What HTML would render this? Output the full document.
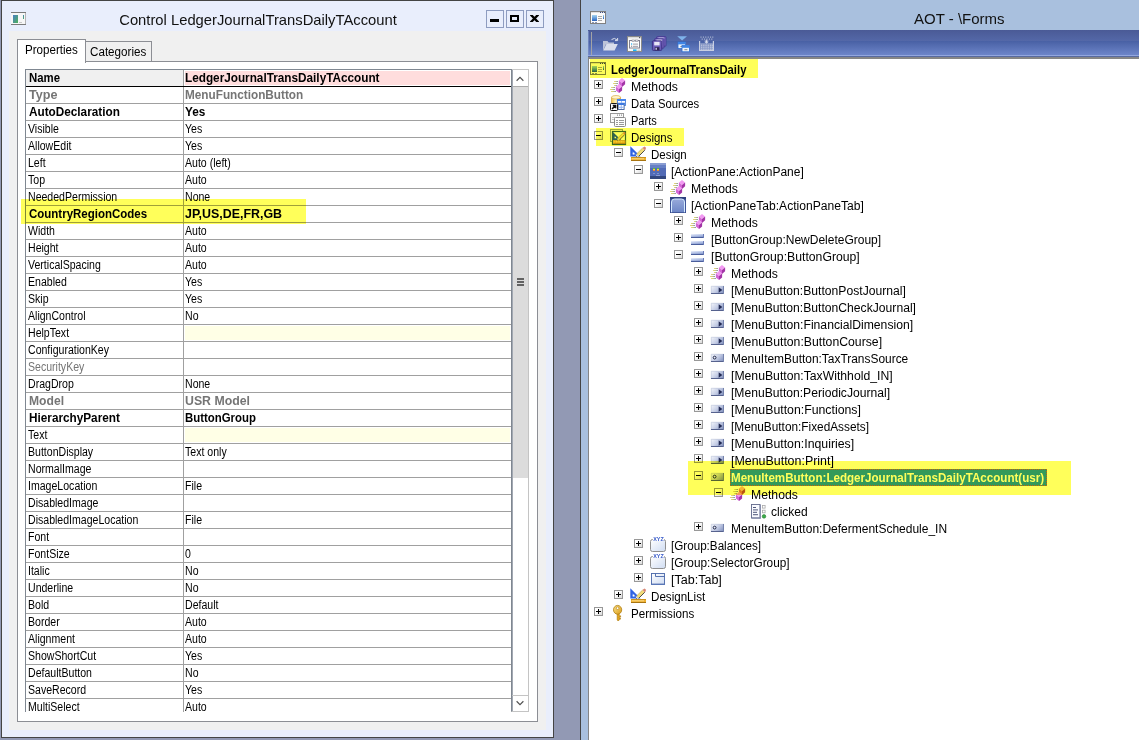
<!DOCTYPE html>
<html lang="en"><head><meta charset="utf-8"><title>Control LedgerJournalTransDailyTAccount</title>
<style>
html,body{margin:0;padding:0}
body{width:1139px;height:740px;overflow:hidden;background:#9299b4;position:relative;font-family:"Liberation Sans",sans-serif;color:#000}
div,span{position:absolute;box-sizing:border-box;white-space:pre}
svg{position:absolute;overflow:visible}
#lw{left:1px;top:0;width:553px;height:738px;background:#e9eefc;border:1px solid #444}
#lt{left:29px;top:10px;width:454px;transform:scaleX(.985);text-align:center;font-size:15px;line-height:18px;color:#111}
.cb{top:9px;width:18px;height:18px;border:1px solid #8e9cc0;background:#e9eefc}
#lc{left:7px;top:30px;width:537px;height:699px;background:#f0f0f0}
#panel{left:8px;top:30px;width:521px;height:661px;background:#fff;border:1px solid #8c8e94}
.tab{font-size:12px;line-height:14px;color:#000}
#tab1{left:8px;top:8px;width:69px;height:24px;background:#fff;border:1px solid #8c8e94;border-bottom:none}
#tab2{left:76px;top:10px;width:67px;height:20px;background:#f0f0f0;border:1px solid #8c8e94;border-bottom:none}
#grid{left:7px;top:7px;width:504px;height:643px;background:#fff;overflow:hidden;border-left:1px solid #7f8791;border-top:1px solid #7f8791}
.r{left:0;width:485px;height:17px;border-bottom:1px solid #a0a0a0}
.r .k,.r .v{top:0;height:16px;font-size:12px;line-height:16px;transform-origin:0 50%}
.r .k{left:2px}
.r .v{left:159px}
.r .s{left:157px;top:0;width:1px;height:16px;background:#a0a0a0}
.n .k,.n .v{transform:scaleX(.88)}
.b .k,.b .v{font-weight:bold;transform:scaleX(.98)}
.b .k{left:3px}
.g{color:#757575}
.vb{left:159px;top:1px;width:325px;height:14px}
#sb{left:485px;top:-1px;width:18px;height:643px;background:#fff;border-left:1px solid #7f8791;border-right:1px solid #c4c4c4;border-top:1px solid #c8c8c8;border-bottom:1px solid #c4c4c4}
#rw{left:580px;top:0;width:559px;height:740px;background:#a9c0de;border-left:1px solid #444}
#rt{left:333px;top:10px;font-size:15px;line-height:18px;color:#111}
#tb{left:7px;top:30px;width:552px;height:27px;background:linear-gradient(#4a5a96 0,#5468a8 11px,#4860a4 11px,#6d85c9 25px,#93a7df 25px,#93a7df 26px,#586aa0 26px,#586aa0 27px)}
#tree{left:7px;top:57px;width:552px;height:683px;background:#fff;border-left:1px solid #868686;border-top:2px solid #868686}
.t{font-size:12px;line-height:17px;height:17px;transform-origin:0 50%}
.tbld{font-weight:bold;transform:scaleX(.93)}
.x{width:9px;height:9px;border:1px solid #989898;background:linear-gradient(135deg,#fff 35%,#d8d8d8)}
.x i{position:absolute;left:1px;top:3px;width:5px;height:1px;background:#000}
.x b{position:absolute;left:3px;top:1px;width:1px;height:5px;background:#000}
.hl{background:#ffff5a;mix-blend-mode:multiply}
</style></head>
<body>
<svg width="0" height="0" style="left:0;top:0"><defs><linearGradient id="gb" x1="0" y1="0" x2=".35" y2="1"><stop offset="0" stop-color="#eef2fb"/><stop offset=".5" stop-color="#b4c2e6"/><stop offset="1" stop-color="#7a90c8"/></linearGradient><linearGradient id="gw" x1="0" y1="0" x2="0" y2="1"><stop offset="0" stop-color="#a4d4f2"/><stop offset=".8" stop-color="#3f7ccc"/><stop offset="1" stop-color="#2a5cb4"/></linearGradient><linearGradient id="gg" x1="0" y1="0" x2="1" y2="1"><stop offset="0" stop-color="#ffffff"/><stop offset="1" stop-color="#cfdcf2"/></linearGradient><linearGradient id="gy" x1="0" y1="0" x2="1" y2="0"><stop offset="0" stop-color="#f3c64a"/><stop offset=".45" stop-color="#fdf0b8"/><stop offset="1" stop-color="#e0a830"/></linearGradient><linearGradient id="gk" x1="0" y1="0" x2="1" y2="1"><stop offset="0" stop-color="#fde48a"/><stop offset="1" stop-color="#d89a18"/></linearGradient><linearGradient id="gx" x1="0" y1="0" x2="1" y2="1"><stop offset="0" stop-color="#ffffff"/><stop offset="1" stop-color="#d4d4d4"/></linearGradient><linearGradient id="gm" x1="0" y1="0" x2="1" y2="0"><stop offset="0" stop-color="#f0e070"/><stop offset=".5" stop-color="#c8c488"/><stop offset="1" stop-color="#8494b0"/></linearGradient><linearGradient id="gt" x1="0" y1="0" x2="0" y2="1"><stop offset="0" stop-color="#98aadb"/><stop offset="1" stop-color="#6b85c6"/></linearGradient><linearGradient id="gn" x1="0" y1="0" x2="1" y2=".6"><stop offset="0" stop-color="#f6f8fc"/><stop offset=".55" stop-color="#c6cee6"/><stop offset="1" stop-color="#8c9ac4"/></linearGradient></defs></svg>
<div id="lw">
<div id="lt">Control LedgerJournalTransDailyTAccount</div>
<svg style="left:9px;top:11px" width="15" height="13" viewBox="0 0 15 13"><rect x="0" y="0" width="15" height="13" fill="#f7f7f7"/><rect x="0" y="0" width="15" height="1" fill="#7a7a7a"/><rect x="0" y="12" width="15" height="1" fill="#7a7a7a"/><rect x="14" y="1" width="1" height="11" fill="#b4b4b4"/><defs><linearGradient id="ga" x1="0" y1="0" x2="1" y2="1"><stop offset="0" stop-color="#4b7fc4"/><stop offset="1" stop-color="#4fb15a"/></linearGradient></defs><rect x="2" y="3" width="5" height="8" fill="url(#ga)"/><rect x="8" y="10" width="3" height="1" fill="#c8c8c8"/><rect x="12" y="3" width="1" height="4" fill="url(#ga)"/></svg>
<div class="cb" style="left:484px"><div style="left:3px;top:8px;width:9px;height:3px;background:#000"></div></div>
<div class="cb" style="left:504px"><div style="left:3px;top:4px;width:9px;height:7px;border:2px solid #000"></div></div>
<div class="cb" style="left:524px"><svg style="left:3px;top:4px;overflow:hidden" width="9" height="7" viewBox="0 0 9 7"><path d="M0.6 -0.6 L8.4 7.6 M8.4 -0.6 L0.6 7.6" stroke="#000" stroke-width="2.3"/></svg></div>
<div id="lc">
<div id="panel">
<div id="grid">
<div class="r b" style="top:0px;border-bottom-color:#000"><div style="left:0;top:0;width:157px;height:16px;background:#f0f0f0"></div><div class="vb" style="background:#ffdddd"></div><span class="k" style="transform:scaleX(0.95)">Name</span><div class="s"></div><span class="v">LedgerJournalTransDailyTAccount</span></div>
<div class="r b" style="top:17px"><span class="k g" style="transform:scaleX(1.05)">Type</span><div class="s"></div><span class="v g">MenuFunctionButton</span></div>
<div class="r b" style="top:34px"><span class="k">AutoDeclaration</span><div class="s"></div><span class="v">Yes</span></div>
<div class="r n" style="top:51px"><span class="k">Visible</span><div class="s"></div><span class="v">Yes</span></div>
<div class="r n" style="top:68px"><span class="k">AllowEdit</span><div class="s"></div><span class="v">Yes</span></div>
<div class="r n" style="top:85px"><span class="k">Left</span><div class="s"></div><span class="v">Auto (left)</span></div>
<div class="r n" style="top:102px"><span class="k">Top</span><div class="s"></div><span class="v">Auto</span></div>
<div class="r n" style="top:119px"><span class="k">NeededPermission</span><div class="s"></div><span class="v">None</span></div>
<div class="r b" style="top:136px"><span class="k" style="transform:scaleX(0.958)">CountryRegionCodes</span><div class="s"></div><span class="v" style="transform:scaleX(1.035)">JP,US,DE,FR,GB</span></div>
<div class="r n" style="top:153px"><span class="k">Width</span><div class="s"></div><span class="v">Auto</span></div>
<div class="r n" style="top:170px"><span class="k">Height</span><div class="s"></div><span class="v">Auto</span></div>
<div class="r n" style="top:187px"><span class="k">VerticalSpacing</span><div class="s"></div><span class="v">Auto</span></div>
<div class="r n" style="top:204px"><span class="k">Enabled</span><div class="s"></div><span class="v">Yes</span></div>
<div class="r n" style="top:221px"><span class="k">Skip</span><div class="s"></div><span class="v">Yes</span></div>
<div class="r n" style="top:238px"><span class="k">AlignControl</span><div class="s"></div><span class="v">No</span></div>
<div class="r n" style="top:255px"><div class="vb" style="background:#ffffe6"></div><span class="k">HelpText</span><div class="s"></div><span class="v"></span></div>
<div class="r n" style="top:272px"><span class="k">ConfigurationKey</span><div class="s"></div><span class="v"></span></div>
<div class="r n" style="top:289px"><span class="k g">SecurityKey</span><div class="s"></div><span class="v g"></span></div>
<div class="r n" style="top:306px"><span class="k">DragDrop</span><div class="s"></div><span class="v">None</span></div>
<div class="r b" style="top:323px"><span class="k g" style="transform:scaleX(1.01)">Model</span><div class="s"></div><span class="v g" style="transform:scaleX(1.025)">USR Model</span></div>
<div class="r b" style="top:340px"><span class="k">HierarchyParent</span><div class="s"></div><span class="v" style="transform:scaleX(0.95)">ButtonGroup</span></div>
<div class="r n" style="top:357px"><div class="vb" style="background:#ffffe6"></div><span class="k">Text</span><div class="s"></div><span class="v"></span></div>
<div class="r n" style="top:374px"><span class="k">ButtonDisplay</span><div class="s"></div><span class="v">Text only</span></div>
<div class="r n" style="top:391px"><span class="k">NormalImage</span><div class="s"></div><span class="v"></span></div>
<div class="r n" style="top:408px"><span class="k">ImageLocation</span><div class="s"></div><span class="v">File</span></div>
<div class="r n" style="top:425px"><span class="k">DisabledImage</span><div class="s"></div><span class="v"></span></div>
<div class="r n" style="top:442px"><span class="k">DisabledImageLocation</span><div class="s"></div><span class="v">File</span></div>
<div class="r n" style="top:459px"><span class="k">Font</span><div class="s"></div><span class="v"></span></div>
<div class="r n" style="top:476px"><span class="k">FontSize</span><div class="s"></div><span class="v">0</span></div>
<div class="r n" style="top:493px"><span class="k">Italic</span><div class="s"></div><span class="v">No</span></div>
<div class="r n" style="top:510px"><span class="k">Underline</span><div class="s"></div><span class="v">No</span></div>
<div class="r n" style="top:527px"><span class="k">Bold</span><div class="s"></div><span class="v">Default</span></div>
<div class="r n" style="top:544px"><span class="k">Border</span><div class="s"></div><span class="v">Auto</span></div>
<div class="r n" style="top:561px"><span class="k">Alignment</span><div class="s"></div><span class="v">Auto</span></div>
<div class="r n" style="top:578px"><span class="k">ShowShortCut</span><div class="s"></div><span class="v">Yes</span></div>
<div class="r n" style="top:595px"><span class="k">DefaultButton</span><div class="s"></div><span class="v">No</span></div>
<div class="r n" style="top:612px"><span class="k">SaveRecord</span><div class="s"></div><span class="v">Yes</span></div>
<div class="r n" style="top:629px"><span class="k">MultiSelect</span><div class="s"></div><span class="v">Auto</span></div>
<div id="sb"><svg style="left:4px;top:6px" width="8" height="6" viewBox="0 0 9 6"><path d="M0.7 5 L4.5 1.2 L8.3 5" fill="none" stroke="#505050" stroke-width="1.3"/></svg><div style="left:0;top:16px;width:16px;height:392px;background:#dcdcdc;border-top:1px solid #acacac"></div><div style="left:5px;top:208px;width:7px;height:2px;background:#636363"></div><div style="left:5px;top:211px;width:7px;height:2px;background:#636363"></div><div style="left:5px;top:214px;width:7px;height:2px;background:#636363"></div><div style="left:0;top:0;width:1px;height:641px;background:#a2a8b2"></div><svg style="left:4px;top:630px" width="8" height="6" viewBox="0 0 9 6"><path d="M0.7 1 L4.5 4.8 L8.3 1" fill="none" stroke="#505050" stroke-width="1.3"/></svg><div style="left:0;top:625px;width:16px;height:1px;background:#c4c4c4"></div></div>
</div>
<div style="left:494px;top:7px;width:17px;height:1px;background:#c8c8c8"></div>
</div>
<div id="tab1" class="tab"><span style="left:7px;top:3px;transform:scaleX(.965);transform-origin:0 50%">Properties</span></div>
<div id="tab2" class="tab"><span style="left:4px;top:3px;transform:scaleX(.97);transform-origin:0 50%">Categories</span></div>
<div style="left:12px;top:168px;width:285px;height:25px;background:#ffff5a;mix-blend-mode:multiply"></div>
</div>
</div>
<div id="rw">
<div id="rt">AOT - \Forms</div>
<svg style="left:9px;top:11px" width="16" height="13" viewBox="0 0 16 13"><rect x="0.5" y="0.5" width="15" height="12" fill="#fbfbfb" stroke="#808080"/><rect x="1" y="1" width="14" height="1" fill="#e2e2e2"/><rect x="10" y="1" width="1" height="1" fill="#3c4c84"/><rect x="12" y="1" width="1" height="1" fill="#3c4c84"/><rect x="14" y="1" width="1" height="1" fill="#3c4c84"/><rect x="2" y="4" width="5" height="6" fill="url(#gw)"/><rect x="8" y="5" width="4" height="1" fill="#a8a8a8"/><rect x="8" y="7" width="4" height="1" fill="#a8a8a8"/><rect x="8" y="9" width="4" height="1" fill="#a8a8a8"/><rect x="13" y="4" width="1" height="4" fill="url(#gw)"/><rect x="2" y="11" width="2" height="1" fill="#8894b4"/><rect x="5" y="11" width="2" height="1" fill="#8894b4"/></svg>
<div id="tb"><div style="left:0;top:1px;width:1px;height:24px;background:#7d91c8;opacity:.7"></div><div style="left:3px;top:2px;width:1px;height:23px;background:#a3a3a6"></div><svg style="left:14px;top:6px" width="16" height="16" viewBox="0 0 16 16"><path d="M1 5 h4.5 l1.2 1.4 h5.3 v1.6 h-8 l-3 6.5 z" fill="#bcc3d8"/><path d="M4.4 8 h11.4 l-3.2 6.6 h-11.4 z" fill="#d9deec"/><path d="M9.5 3.6 q3 -2.6 5.6 0.4" fill="none" stroke="#d9deec" stroke-width="1"/><path d="M15.6 2 v2.6 h-2.6" fill="none" stroke="#d9deec" stroke-width="1"/></svg>
<svg style="left:39px;top:6px" width="16" height="16" viewBox="0 0 16 16"><rect x="0.5" y="0.5" width="14" height="15" fill="#f8f8f8" stroke="#8a8a8a"/><rect x="1" y="1" width="13" height="1.4" fill="#dcdcdc"/><rect x="12" y="1" width="1.2" height="1.2" fill="#556"/><rect x="2.5" y="4.5" width="10" height="7.5" fill="#fff" stroke="#80808e"/><rect x="5" y="4" width="2.6" height="1.6" fill="#fff" stroke="#80808e" stroke-width=".6"/><rect x="8.4" y="4" width="2.6" height="1.6" fill="#fff" stroke="#80808e" stroke-width=".6"/><rect x="4" y="7.4" width="1.2" height="1.2" fill="#18a8f0"/><rect x="6" y="7.6" width="5" height="1" fill="#9a9aa4"/><rect x="4" y="9.6" width="1.2" height="1.2" fill="#8a8a94"/><rect x="6" y="9.8" width="5" height="1" fill="#9a9aa4"/><rect x="6" y="13.4" width="3.6" height="1.6" fill="#18b4f4"/><rect x="10.4" y="13.6" width="3" height="1.2" fill="#c8c8c8"/></svg>
<svg style="left:64px;top:6px" width="16" height="16" viewBox="0 0 16 16"><g transform="translate(4.6,0.6)"><rect x="0" y="0" width="9.4" height="9.6" rx=".8" fill="#7868c0" stroke="#40348c" stroke-width=".8"/><rect x="1.8" y="1" width="5.4" height="3.6" fill="#e8e6f6"/><rect x="2.4" y="6.4" width="4.6" height="3.2" fill="#2c2450"/><rect x="3" y="7" width="1.6" height="2" fill="#b8b4d8"/></g><g transform="translate(2.6,2.6)"><rect x="0" y="0" width="9.4" height="9.6" rx=".8" fill="#7464bc" stroke="#40348c" stroke-width=".8"/><rect x="1.8" y="1" width="5.4" height="3.6" fill="#e8e6f6"/><rect x="2.4" y="6.4" width="4.6" height="3.2" fill="#2c2450"/><rect x="3" y="7" width="1.6" height="2" fill="#b8b4d8"/></g><g transform="translate(0.4,4.8)"><rect x="0" y="0" width="9.4" height="9.6" rx=".8" fill="#6c5cb8" stroke="#34287c" stroke-width=".8"/><rect x="1.8" y="1" width="5.4" height="3.6" fill="#e8e6f6"/><rect x="2.4" y="6.4" width="4.6" height="3.2" fill="#2c2450"/><rect x="3" y="7" width="1.6" height="2" fill="#b8b4d8"/></g></svg>
<svg style="left:89px;top:6px" width="16" height="16" viewBox="0 0 16 16"><polygon points="0.2,0.2 10,0.2 5.1,4.6" fill="#7fb2ea"/><rect x="1" y="6" width="7.4" height="6.6" fill="#eef4fc" stroke="#2f6fd0" stroke-width=".8"/><rect x="1" y="6" width="7.4" height="2.4" fill="#3f84e4"/><rect x="3.4" y="10" width="3" height="1" fill="#8a8a8a"/><rect x="5" y="9.4" width="7.4" height="6.4" fill="#eef4fc" stroke="#2f6fd0" stroke-width=".8"/><rect x="5" y="9.4" width="7.4" height="2.4" fill="#3f84e4"/><rect x="7.4" y="13.2" width="3" height="1" fill="#8a8a8a"/></svg>
<svg style="left:111px;top:6px" width="16" height="16" viewBox="0 0 16 16"><path d="M0.6 5 V14.4 H14.4 V5" fill="none" stroke="#c9cfe2" stroke-width="1.2"/><rect x="1.5" y="0.6" width="1" height="1" fill="#c9cfe2"/><rect x="3.9" y="0.6" width="1" height="1" fill="#c9cfe2"/><rect x="6.3" y="0.6" width="1" height="1" fill="#c9cfe2"/><rect x="8.7" y="0.6" width="1" height="1" fill="#c9cfe2"/><rect x="11.1" y="0.6" width="1" height="1" fill="#c9cfe2"/><rect x="13.3" y="0.6" width="1" height="1" fill="#c9cfe2"/><rect x="2.7" y="2.6" width="1" height="1" fill="#c9cfe2"/><rect x="5.1" y="2.6" width="1" height="1" fill="#c9cfe2"/><rect x="7.5" y="2.6" width="1" height="1" fill="#c9cfe2"/><rect x="9.9" y="2.6" width="1" height="1" fill="#c9cfe2"/><rect x="12.3" y="2.6" width="1" height="1" fill="#c9cfe2"/><rect x="2" y="8.6" width="1.3" height="1.2" fill="#dfe3f0"/><rect x="4.2" y="8.6" width="1.3" height="1.2" fill="#dfe3f0"/><rect x="6.4" y="8.6" width="1.3" height="1.2" fill="#dfe3f0"/><rect x="8.6" y="8.6" width="1.3" height="1.2" fill="#dfe3f0"/><rect x="10.8" y="8.6" width="1.3" height="1.2" fill="#dfe3f0"/><rect x="12.6" y="8.6" width="1.3" height="1.2" fill="#dfe3f0"/><rect x="2" y="10.6" width="1.3" height="1.2" fill="#dfe3f0"/><rect x="4.2" y="10.6" width="1.3" height="1.2" fill="#dfe3f0"/><rect x="6.4" y="10.6" width="1.3" height="1.2" fill="#dfe3f0"/><rect x="8.6" y="10.6" width="1.3" height="1.2" fill="#dfe3f0"/><rect x="10.8" y="10.6" width="1.3" height="1.2" fill="#dfe3f0"/><rect x="12.6" y="10.6" width="1.3" height="1.2" fill="#dfe3f0"/><rect x="2" y="12.6" width="1.3" height="1.2" fill="#dfe3f0"/><rect x="4.2" y="12.6" width="1.3" height="1.2" fill="#dfe3f0"/><rect x="6.4" y="12.6" width="1.3" height="1.2" fill="#dfe3f0"/><rect x="8.6" y="12.6" width="1.3" height="1.2" fill="#dfe3f0"/><rect x="10.8" y="12.6" width="1.3" height="1.2" fill="#dfe3f0"/><rect x="12.6" y="12.6" width="1.3" height="1.2" fill="#dfe3f0"/><rect x="1.2" y="7" width="12.6" height="7" fill="#aab4d4" opacity=".55"/><path d="M7.5 3.6 v4 M5.6 5.8 h3.8 M6.2 4.4 l2.6 2.6 M8.8 4.4 l-2.6 2.6" stroke="#dfe3f0" stroke-width=".8"/></svg>
</div>
<div id="tree">
<svg style="left:1px;top:2px" width="16" height="16" viewBox="0 0 16 16"><g transform="translate(0,1)"><rect x="0.5" y="0.5" width="15" height="12" fill="#fbfbfb" stroke="#808080"/><rect x="1" y="1" width="14" height="1" fill="#e2e2e2"/><rect x="10" y="1" width="1" height="1" fill="#3c4c84"/><rect x="12" y="1" width="1" height="1" fill="#3c4c84"/><rect x="14" y="1" width="1" height="1" fill="#3c4c84"/><rect x="2" y="4" width="5" height="6" fill="url(#gw)"/><rect x="8" y="5" width="4" height="1" fill="#a8a8a8"/><rect x="8" y="7" width="4" height="1" fill="#a8a8a8"/><rect x="8" y="9" width="4" height="1" fill="#a8a8a8"/><rect x="13" y="4" width="1" height="4" fill="url(#gw)"/><rect x="2" y="11" width="2" height="1" fill="#8894b4"/><rect x="5" y="11" width="2" height="1" fill="#8894b4"/></g></svg>
<span class="t tbld" style="left:22px;top:3px;transform:scaleX(0.94)">LedgerJournalTransDaily</span>
<div class="x" style="left:5px;top:21px"><i></i><b></b></div><svg style="left:21px;top:19px" width="16" height="16" viewBox="0 0 16 16"><rect x="4" y="3" width="4" height="1" fill="url(#gm)"/><rect x="3" y="5" width="5" height="1" fill="url(#gm)"/><rect x="4" y="7" width="3" height="1" fill="url(#gm)"/><rect x="1" y="9" width="4" height="1" fill="url(#gm)"/><rect x="0" y="11" width="5" height="1" fill="url(#gm)"/><rect x="1" y="13" width="5" height="1" fill="url(#gm)"/><polygon points="12.0,0.0 15.1,2.5 12.0,5.0 8.9,2.5" fill="#f29af2"/><polygon points="8.9,2.5 12.0,5.0 12.0,8.9 8.9,6.3" fill="#d465d6"/><polygon points="15.1,2.5 12.0,5.0 12.0,8.9 15.1,6.3" fill="#a234a6"/><polygon points="9.0,6.1 12.1,8.6 9.0,11.1 5.9,8.6" fill="#f29af2"/><polygon points="5.9,8.6 9.0,11.1 9.0,15.0 5.9,12.4" fill="#d465d6"/><polygon points="12.1,8.6 9.0,11.1 9.0,15.0 12.1,12.4" fill="#a234a6"/></svg>
<span class="t" style="left:42px;top:20px;transform:scaleX(1.017)">Methods</span>
<div class="x" style="left:5px;top:38px"><i></i><b></b></div><svg style="left:21px;top:36px" width="16" height="16" viewBox="0 0 16 16"><path d="M1.5 2.3 v6.4 a4.5 1.8 0 0 0 9 0 v-6.4 z" fill="url(#gy)" stroke="#d0a238" stroke-width=".7"/><ellipse cx="6" cy="2.3" rx="4.5" ry="1.8" fill="#fef4cc" stroke="#d8ac44" stroke-width=".7"/><rect x="7.5" y="4.5" width="8" height="6" fill="#fff" stroke="#4a80dc" stroke-width=".9"/><rect x="7" y="4" width="9" height="2" fill="#4684ea"/><rect x="8" y="7.6" width="7" height=".9" fill="#86acf0"/><rect x="11.2" y="6" width=".8" height="4" fill="#86acf0"/><rect x="8.1" y="8.5" width="6" height="6" fill="#fff" stroke="#3a5c9c" stroke-width=".9"/><rect x="7.6" y="8" width="7" height="2" fill="#3c78e0"/><rect x="8.6" y="11.8" width="5" height=".9" fill="#86acf0"/><rect x="10.8" y="10" width=".8" height="4" fill="#86acf0"/><rect x="0.5" y="8.5" width="7" height="7" rx=".8" fill="#fff" stroke="#181818"/><path d="M2 14 L5.4 10.6 M2.8 10.4 H5.6 V13.2" stroke="#101010" stroke-width="1.5" fill="none"/></svg>
<span class="t" style="left:42px;top:37px;transform:scaleX(0.938)">Data Sources</span>
<div class="x" style="left:5px;top:55px"><i></i><b></b></div><svg style="left:21px;top:53px" width="16" height="16" viewBox="0 0 16 16"><rect x="0.5" y="1.5" width="13" height="9" fill="#fbfbfb" stroke="#9a9a9a"/><rect x="7" y="2.6" width="1" height="1" fill="#777"/><rect x="9" y="2.6" width="1" height="1" fill="#777"/><rect x="11" y="2.6" width="1" height="1" fill="#777"/><rect x="2" y="5" width="3" height="1" fill="#c4c4c4"/><rect x="2" y="7" width="2" height="1" fill="#c4c4c4"/><rect x="4.5" y="5.5" width="11" height="9" rx="1" fill="#fdfdfd" stroke="#8a8a8a"/><rect x="6" y="8" width="2" height="1" fill="#999"/><rect x="9" y="8" width="5" height="1" fill="#999"/><rect x="6" y="10" width="2" height="1" fill="#999"/><rect x="9" y="10" width="5" height="1" fill="#999"/><rect x="6" y="12" width="2" height="1" fill="#999"/><rect x="9" y="12" width="5" height="1" fill="#999"/></svg>
<span class="t" style="left:42px;top:54px;transform:scaleX(0.92)">Parts</span>
<div class="x" style="left:5px;top:72px"><i></i></div><svg style="left:21px;top:70px" width="16" height="16" viewBox="0 0 16 16"><rect x="0.5" y="0.5" width="12" height="12" fill="#f8f8f8" stroke="#9aa8a0"/><rect x="2.5" y="2.5" width="13" height="13" fill="#fcfff4" stroke="#3a6a52" stroke-width="1.2"/><g transform="translate(2.4,2.4) scale(.82)"><polygon points="0.3,0.3 0.3,10.6 10.6,10.6" fill="#2f62e2"/><polygon points="2.4,5.2 2.4,8.8 6,8.8" fill="#6f98f2"/><circle cx="3.6" cy="7.5" r=".9" fill="#fff"/><rect x="1" y="11" width="15" height="4" fill="#eeb030"/><rect x="1" y="14" width="15" height="1" fill="#a87410"/><rect x="1" y="11" width="15" height=".8" fill="#c48c18"/><path d="M3 12 v1.4 M5 12 v1.4 M7 12 v1.4 M9 12 v1.4 M11 12 v1.4 M13 12 v1.4" stroke="#ffe9a8" stroke-width="1"/><polygon points="12.6,2 14.8,4.2 8.6,10.4 6.4,8.2" fill="#f2dc78"/><path d="M14.8 4.2 L8.6 10.4" stroke="#3a3a3a" stroke-width=".9"/><path d="M12.6 2 L6.4 8.2" stroke="#b89c40" stroke-width=".6"/><polygon points="6.4,8.2 8.6,10.4 5.4,11.2" fill="#e8e8ec"/><polygon points="6.4,10 7,10.7 5.4,11.2" fill="#202020"/><polygon points="13.4,1.2 14.6,0.4 16,1.8 15.6,3.4 14.8,4.2 12.6,2" fill="#d88472"/></g></svg>
<span class="t" style="left:42px;top:71px;transform:scaleX(0.957)">Designs</span>
<div class="x" style="left:25px;top:89px"><i></i></div><svg style="left:41px;top:87px" width="16" height="16" viewBox="0 0 16 16"><polygon points="0.3,0.3 0.3,10.6 10.6,10.6" fill="#2f62e2"/><polygon points="2.4,5.2 2.4,8.8 6,8.8" fill="#6f98f2"/><circle cx="3.6" cy="7.5" r=".9" fill="#fff"/><rect x="1" y="11" width="15" height="4" fill="#eeb030"/><rect x="1" y="14" width="15" height="1" fill="#a87410"/><rect x="1" y="11" width="15" height=".8" fill="#c48c18"/><path d="M3 12 v1.4 M5 12 v1.4 M7 12 v1.4 M9 12 v1.4 M11 12 v1.4 M13 12 v1.4" stroke="#ffe9a8" stroke-width="1"/><polygon points="12.6,2 14.8,4.2 8.6,10.4 6.4,8.2" fill="#f2dc78"/><path d="M14.8 4.2 L8.6 10.4" stroke="#3a3a3a" stroke-width=".9"/><path d="M12.6 2 L6.4 8.2" stroke="#b89c40" stroke-width=".6"/><polygon points="6.4,8.2 8.6,10.4 5.4,11.2" fill="#e8e8ec"/><polygon points="6.4,10 7,10.7 5.4,11.2" fill="#202020"/><polygon points="13.4,1.2 14.6,0.4 16,1.8 15.6,3.4 14.8,4.2 12.6,2" fill="#d88472"/></svg>
<span class="t" style="left:62px;top:88px;transform:scaleX(0.957)">Design</span>
<div class="x" style="left:45px;top:106px"><i></i></div><svg style="left:61px;top:104px" width="16" height="16" viewBox="0 0 16 16"><rect x="0" y="0" width="16" height="16" fill="#526bb6"/><rect x="0" y="0" width="16" height="2" fill="#8a9dd2"/><rect x="0" y="2" width="16" height="3" fill="#6780c4"/><rect x="0" y="13" width="16" height="3" fill="#33477f"/><rect x="3" y="5" width="2" height="1" fill="#58c040"/><rect x="7" y="5" width="2" height="1" fill="#58c040"/><rect x="3" y="6" width="2" height="1" fill="#f6d838"/><rect x="7" y="6" width="2" height="1" fill="#f6d838"/><rect x="3" y="7" width="2" height="1" fill="#f08a28"/><rect x="7" y="7" width="2" height="1" fill="#f08a28"/><rect x="3" y="10" width="2" height="1" fill="#7d92d0"/><rect x="7" y="10" width="2" height="1" fill="#7d92d0"/><rect x="6" y="12" width="4" height="1" fill="#8a9cd4"/></svg>
<span class="t" style="left:82px;top:105px">[ActionPane:ActionPane]</span>
<div class="x" style="left:65px;top:123px"><i></i><b></b></div><svg style="left:81px;top:121px" width="16" height="16" viewBox="0 0 16 16"><rect x="4" y="3" width="4" height="1" fill="url(#gm)"/><rect x="3" y="5" width="5" height="1" fill="url(#gm)"/><rect x="4" y="7" width="3" height="1" fill="url(#gm)"/><rect x="1" y="9" width="4" height="1" fill="url(#gm)"/><rect x="0" y="11" width="5" height="1" fill="url(#gm)"/><rect x="1" y="13" width="5" height="1" fill="url(#gm)"/><polygon points="12.0,0.0 15.1,2.5 12.0,5.0 8.9,2.5" fill="#f29af2"/><polygon points="8.9,2.5 12.0,5.0 12.0,8.9 8.9,6.3" fill="#d465d6"/><polygon points="15.1,2.5 12.0,5.0 12.0,8.9 15.1,6.3" fill="#a234a6"/><polygon points="9.0,6.1 12.1,8.6 9.0,11.1 5.9,8.6" fill="#f29af2"/><polygon points="5.9,8.6 9.0,11.1 9.0,15.0 5.9,12.4" fill="#d465d6"/><polygon points="12.1,8.6 9.0,11.1 9.0,15.0 12.1,12.4" fill="#a234a6"/></svg>
<span class="t" style="left:102px;top:122px;transform:scaleX(1.017)">Methods</span>
<div class="x" style="left:65px;top:140px"><i></i></div><svg style="left:81px;top:138px" width="16" height="16" viewBox="0 0 16 16"><rect x="0" y="0" width="16" height="16" fill="#3d5398"/><rect x="0" y="0" width="16" height="2" fill="#2f417e"/><path d="M1.5 16 V5 a3 3 0 0 1 3 -3 H11.5 a3 3 0 0 1 3 3 V16" fill="url(#gt)" stroke="#d6ecff" stroke-width="1"/><rect x="0" y="15" width="16" height="1" fill="#34488a" opacity=".7"/></svg>
<span class="t" style="left:102px;top:139px;transform:scaleX(1.008)">[ActionPaneTab:ActionPaneTab]</span>
<div class="x" style="left:85px;top:157px"><i></i><b></b></div><svg style="left:101px;top:155px" width="16" height="16" viewBox="0 0 16 16"><rect x="4" y="3" width="4" height="1" fill="url(#gm)"/><rect x="3" y="5" width="5" height="1" fill="url(#gm)"/><rect x="4" y="7" width="3" height="1" fill="url(#gm)"/><rect x="1" y="9" width="4" height="1" fill="url(#gm)"/><rect x="0" y="11" width="5" height="1" fill="url(#gm)"/><rect x="1" y="13" width="5" height="1" fill="url(#gm)"/><polygon points="12.0,0.0 15.1,2.5 12.0,5.0 8.9,2.5" fill="#f29af2"/><polygon points="8.9,2.5 12.0,5.0 12.0,8.9 8.9,6.3" fill="#d465d6"/><polygon points="15.1,2.5 12.0,5.0 12.0,8.9 15.1,6.3" fill="#a234a6"/><polygon points="9.0,6.1 12.1,8.6 9.0,11.1 5.9,8.6" fill="#f29af2"/><polygon points="5.9,8.6 9.0,11.1 9.0,15.0 5.9,12.4" fill="#d465d6"/><polygon points="12.1,8.6 9.0,11.1 9.0,15.0 12.1,12.4" fill="#a234a6"/></svg>
<span class="t" style="left:122px;top:156px;transform:scaleX(1.017)">Methods</span>
<div class="x" style="left:85px;top:174px"><i></i><b></b></div><svg style="left:101px;top:172px" width="16" height="16" viewBox="0 0 16 16"><rect x="1" y="3" width="13" height="4" fill="url(#gb)"/><rect x="1" y="6" width="13" height="1" fill="#4a5e9c"/><rect x="13" y="3" width="1" height="4" fill="#6a7cb8"/><rect x="1" y="10" width="13" height="4" fill="url(#gb)"/><rect x="1" y="13" width="13" height="1" fill="#4a5e9c"/><rect x="13" y="10" width="1" height="4" fill="#6a7cb8"/></svg>
<span class="t" style="left:122px;top:173px">[ButtonGroup:NewDeleteGroup]</span>
<div class="x" style="left:85px;top:191px"><i></i></div><svg style="left:101px;top:189px" width="16" height="16" viewBox="0 0 16 16"><rect x="1" y="3" width="13" height="4" fill="url(#gb)"/><rect x="1" y="6" width="13" height="1" fill="#4a5e9c"/><rect x="13" y="3" width="1" height="4" fill="#6a7cb8"/><rect x="1" y="10" width="13" height="4" fill="url(#gb)"/><rect x="1" y="13" width="13" height="1" fill="#4a5e9c"/><rect x="13" y="10" width="1" height="4" fill="#6a7cb8"/></svg>
<span class="t" style="left:122px;top:190px;transform:scaleX(1.018)">[ButtonGroup:ButtonGroup]</span>
<div class="x" style="left:105px;top:208px"><i></i><b></b></div><svg style="left:121px;top:206px" width="16" height="16" viewBox="0 0 16 16"><rect x="4" y="3" width="4" height="1" fill="url(#gm)"/><rect x="3" y="5" width="5" height="1" fill="url(#gm)"/><rect x="4" y="7" width="3" height="1" fill="url(#gm)"/><rect x="1" y="9" width="4" height="1" fill="url(#gm)"/><rect x="0" y="11" width="5" height="1" fill="url(#gm)"/><rect x="1" y="13" width="5" height="1" fill="url(#gm)"/><polygon points="12.0,0.0 15.1,2.5 12.0,5.0 8.9,2.5" fill="#f29af2"/><polygon points="8.9,2.5 12.0,5.0 12.0,8.9 8.9,6.3" fill="#d465d6"/><polygon points="15.1,2.5 12.0,5.0 12.0,8.9 15.1,6.3" fill="#a234a6"/><polygon points="9.0,6.1 12.1,8.6 9.0,11.1 5.9,8.6" fill="#f29af2"/><polygon points="5.9,8.6 9.0,11.1 9.0,15.0 5.9,12.4" fill="#d465d6"/><polygon points="12.1,8.6 9.0,11.1 9.0,15.0 12.1,12.4" fill="#a234a6"/></svg>
<span class="t" style="left:142px;top:207px;transform:scaleX(1.017)">Methods</span>
<div class="x" style="left:105px;top:225px"><i></i><b></b></div><svg style="left:121px;top:223px" width="16" height="16" viewBox="0 0 16 16"><rect x="1" y="4" width="13" height="8" fill="url(#gn)"/><path d="M1.25 12 V4.25 H14" fill="none" stroke="#b4bcd2" stroke-width=".5"/><rect x="1" y="11" width="13" height="1" fill="#56628e"/><rect x="13" y="4" width="1" height="8" fill="#7482ac"/><polygon points="8.7,5.2 12.3,8 8.7,10.8" fill="#222a54"/></svg>
<span class="t" style="left:142px;top:224px;transform:scaleX(1.012)">[MenuButton:ButtonPostJournal]</span>
<div class="x" style="left:105px;top:242px"><i></i><b></b></div><svg style="left:121px;top:240px" width="16" height="16" viewBox="0 0 16 16"><rect x="1" y="4" width="13" height="8" fill="url(#gn)"/><path d="M1.25 12 V4.25 H14" fill="none" stroke="#b4bcd2" stroke-width=".5"/><rect x="1" y="11" width="13" height="1" fill="#56628e"/><rect x="13" y="4" width="1" height="8" fill="#7482ac"/><polygon points="8.7,5.2 12.3,8 8.7,10.8" fill="#222a54"/></svg>
<span class="t" style="left:142px;top:241px;transform:scaleX(1.012)">[MenuButton:ButtonCheckJournal]</span>
<div class="x" style="left:105px;top:259px"><i></i><b></b></div><svg style="left:121px;top:257px" width="16" height="16" viewBox="0 0 16 16"><rect x="1" y="4" width="13" height="8" fill="url(#gn)"/><path d="M1.25 12 V4.25 H14" fill="none" stroke="#b4bcd2" stroke-width=".5"/><rect x="1" y="11" width="13" height="1" fill="#56628e"/><rect x="13" y="4" width="1" height="8" fill="#7482ac"/><polygon points="8.7,5.2 12.3,8 8.7,10.8" fill="#222a54"/></svg>
<span class="t" style="left:142px;top:258px;transform:scaleX(1.015)">[MenuButton:FinancialDimension]</span>
<div class="x" style="left:105px;top:276px"><i></i><b></b></div><svg style="left:121px;top:274px" width="16" height="16" viewBox="0 0 16 16"><rect x="1" y="4" width="13" height="8" fill="url(#gn)"/><path d="M1.25 12 V4.25 H14" fill="none" stroke="#b4bcd2" stroke-width=".5"/><rect x="1" y="11" width="13" height="1" fill="#56628e"/><rect x="13" y="4" width="1" height="8" fill="#7482ac"/><polygon points="8.7,5.2 12.3,8 8.7,10.8" fill="#222a54"/></svg>
<span class="t" style="left:142px;top:275px;transform:scaleX(1.02)">[MenuButton:ButtonCourse]</span>
<div class="x" style="left:105px;top:293px"><i></i><b></b></div><svg style="left:121px;top:291px" width="16" height="16" viewBox="0 0 16 16"><rect x="1" y="4" width="13" height="8" fill="url(#gn)"/><path d="M1.25 12 V4.25 H14" fill="none" stroke="#b4bcd2" stroke-width=".5"/><rect x="1" y="11" width="13" height="1" fill="#56628e"/><rect x="13" y="4" width="1" height="8" fill="#7482ac"/><circle cx="4.6" cy="7.6" r="1.4" fill="#eef0f8" stroke="#1c2448" stroke-width="1"/></svg>
<span class="t" style="left:142px;top:292px;transform:scaleX(0.994)">MenuItemButton:TaxTransSource</span>
<div class="x" style="left:105px;top:310px"><i></i><b></b></div><svg style="left:121px;top:308px" width="16" height="16" viewBox="0 0 16 16"><rect x="1" y="4" width="13" height="8" fill="url(#gn)"/><path d="M1.25 12 V4.25 H14" fill="none" stroke="#b4bcd2" stroke-width=".5"/><rect x="1" y="11" width="13" height="1" fill="#56628e"/><rect x="13" y="4" width="1" height="8" fill="#7482ac"/><polygon points="8.7,5.2 12.3,8 8.7,10.8" fill="#222a54"/></svg>
<span class="t" style="left:142px;top:309px;transform:scaleX(1.018)">[MenuButton:TaxWithhold_IN]</span>
<div class="x" style="left:105px;top:327px"><i></i><b></b></div><svg style="left:121px;top:325px" width="16" height="16" viewBox="0 0 16 16"><rect x="1" y="4" width="13" height="8" fill="url(#gn)"/><path d="M1.25 12 V4.25 H14" fill="none" stroke="#b4bcd2" stroke-width=".5"/><rect x="1" y="11" width="13" height="1" fill="#56628e"/><rect x="13" y="4" width="1" height="8" fill="#7482ac"/><polygon points="8.7,5.2 12.3,8 8.7,10.8" fill="#222a54"/></svg>
<span class="t" style="left:142px;top:326px;transform:scaleX(1.01)">[MenuButton:PeriodicJournal]</span>
<div class="x" style="left:105px;top:344px"><i></i><b></b></div><svg style="left:121px;top:342px" width="16" height="16" viewBox="0 0 16 16"><rect x="1" y="4" width="13" height="8" fill="url(#gn)"/><path d="M1.25 12 V4.25 H14" fill="none" stroke="#b4bcd2" stroke-width=".5"/><rect x="1" y="11" width="13" height="1" fill="#56628e"/><rect x="13" y="4" width="1" height="8" fill="#7482ac"/><polygon points="8.7,5.2 12.3,8 8.7,10.8" fill="#222a54"/></svg>
<span class="t" style="left:142px;top:343px;transform:scaleX(1.025)">[MenuButton:Functions]</span>
<div class="x" style="left:105px;top:361px"><i></i><b></b></div><svg style="left:121px;top:359px" width="16" height="16" viewBox="0 0 16 16"><rect x="1" y="4" width="13" height="8" fill="url(#gn)"/><path d="M1.25 12 V4.25 H14" fill="none" stroke="#b4bcd2" stroke-width=".5"/><rect x="1" y="11" width="13" height="1" fill="#56628e"/><rect x="13" y="4" width="1" height="8" fill="#7482ac"/><polygon points="8.7,5.2 12.3,8 8.7,10.8" fill="#222a54"/></svg>
<span class="t" style="left:142px;top:360px;transform:scaleX(0.985)">[MenuButton:FixedAssets]</span>
<div class="x" style="left:105px;top:378px"><i></i><b></b></div><svg style="left:121px;top:376px" width="16" height="16" viewBox="0 0 16 16"><rect x="1" y="4" width="13" height="8" fill="url(#gn)"/><path d="M1.25 12 V4.25 H14" fill="none" stroke="#b4bcd2" stroke-width=".5"/><rect x="1" y="11" width="13" height="1" fill="#56628e"/><rect x="13" y="4" width="1" height="8" fill="#7482ac"/><polygon points="8.7,5.2 12.3,8 8.7,10.8" fill="#222a54"/></svg>
<span class="t" style="left:142px;top:377px;transform:scaleX(1.026)">[MenuButton:Inquiries]</span>
<div class="x" style="left:105px;top:395px"><i></i><b></b></div><svg style="left:121px;top:393px" width="16" height="16" viewBox="0 0 16 16"><rect x="1" y="4" width="13" height="8" fill="url(#gn)"/><path d="M1.25 12 V4.25 H14" fill="none" stroke="#b4bcd2" stroke-width=".5"/><rect x="1" y="11" width="13" height="1" fill="#56628e"/><rect x="13" y="4" width="1" height="8" fill="#7482ac"/><polygon points="8.7,5.2 12.3,8 8.7,10.8" fill="#222a54"/></svg>
<span class="t" style="left:142px;top:394px;transform:scaleX(1.035)">[MenuButton:Print]</span>
<div class="x" style="left:105px;top:412px"><i></i></div><svg style="left:121px;top:410px" width="16" height="16" viewBox="0 0 16 16"><rect x="1" y="4" width="13" height="8" fill="url(#gn)"/><path d="M1.25 12 V4.25 H14" fill="none" stroke="#b4bcd2" stroke-width=".5"/><rect x="1" y="11" width="13" height="1" fill="#56628e"/><rect x="13" y="4" width="1" height="8" fill="#7482ac"/><circle cx="4.6" cy="7.6" r="1.4" fill="#eef0f8" stroke="#1c2448" stroke-width="1"/></svg>
<div style="left:141px;top:410px;width:317px;height:17px;background:#3399ff;border:1px dotted #cc6600"></div><span class="t tbld" style="left:142px;top:411px;color:#fff;transform:scaleX(.967)">MenuItemButton:LedgerJournalTransDailyTAccount(usr)</span>
<div class="x" style="left:125px;top:429px"><i></i></div><svg style="left:141px;top:427px" width="16" height="16" viewBox="0 0 16 16"><rect x="4" y="3" width="4" height="1" fill="url(#gm)"/><rect x="3" y="5" width="5" height="1" fill="url(#gm)"/><rect x="4" y="7" width="3" height="1" fill="url(#gm)"/><rect x="1" y="9" width="4" height="1" fill="url(#gm)"/><rect x="0" y="11" width="5" height="1" fill="url(#gm)"/><rect x="1" y="13" width="5" height="1" fill="url(#gm)"/><polygon points="12.0,0.0 15.1,2.5 12.0,5.0 8.9,2.5" fill="#f6b48c"/><polygon points="8.9,2.5 12.0,5.0 12.0,8.9 8.9,6.3" fill="#e27c4c"/><polygon points="15.1,2.5 12.0,5.0 12.0,8.9 15.1,6.3" fill="#b85428"/><polygon points="9.0,6.1 12.1,8.6 9.0,11.1 5.9,8.6" fill="#f29af2"/><polygon points="5.9,8.6 9.0,11.1 9.0,15.0 5.9,12.4" fill="#d465d6"/><polygon points="12.1,8.6 9.0,11.1 9.0,15.0 12.1,12.4" fill="#a234a6"/></svg>
<span class="t" style="left:162px;top:428px;transform:scaleX(1.017)">Methods</span>
<svg style="left:162px;top:444px" width="16" height="16" viewBox="0 0 16 16"><g transform="translate(0,1)"><rect x="0.5" y="0.5" width="8.6" height="13.4" fill="#fafbff" stroke="#60688a" stroke-width=".9"/><rect x="8.6" y="1" width="1.2" height="13.6" fill="#8088a8"/><rect x="0.5" y="13.6" width="9" height="1.1" fill="#8088a8"/><rect x="2" y="3" width="3" height="1" fill="#50587a"/><rect x="2" y="5.4" width="5" height="1" fill="#50587a"/><rect x="2" y="7.8" width="4" height="1" fill="#50587a"/><rect x="2" y="10.2" width="5" height="1" fill="#50587a"/><rect x="11.5" y="1.5" width="2.6" height="2.6" fill="#fff" stroke="#a8a8a8" stroke-width=".8"/><rect x="11.5" y="6.2" width="2.6" height="2.6" fill="#fff" stroke="#a8a8a8" stroke-width=".8"/><circle cx="13" cy="12.4" r="1.8" fill="#3cae4a" stroke="#2a7a34" stroke-width=".6"/></g></svg>
<span class="t" style="left:182px;top:445px">clicked</span>
<div class="x" style="left:105px;top:463px"><i></i><b></b></div><svg style="left:121px;top:461px" width="16" height="16" viewBox="0 0 16 16"><rect x="1" y="4" width="13" height="8" fill="url(#gn)"/><path d="M1.25 12 V4.25 H14" fill="none" stroke="#b4bcd2" stroke-width=".5"/><rect x="1" y="11" width="13" height="1" fill="#56628e"/><rect x="13" y="4" width="1" height="8" fill="#7482ac"/><circle cx="4.6" cy="7.6" r="1.4" fill="#eef0f8" stroke="#1c2448" stroke-width="1"/></svg>
<span class="t" style="left:142px;top:462px">MenuItemButton:DefermentSchedule_IN</span>
<div class="x" style="left:45px;top:480px"><i></i><b></b></div><svg style="left:61px;top:478px" width="16" height="16" viewBox="0 0 16 16"><g transform="translate(0,-1)"><rect x="0.5" y="3.5" width="15" height="12" rx="2" fill="url(#gg)" stroke="#8f8f8f"/><rect x="3" y="2.5" width="11" height="2.5" fill="#fff"/><text x="3.2" y="5" font-family="Liberation Sans,sans-serif" font-size="5.4" font-weight="bold" fill="#3558c8" textLength="10.6" lengthAdjust="spacingAndGlyphs">XYZ</text></g></svg>
<span class="t" style="left:82px;top:479px;transform:scaleX(0.971)">[Group:Balances]</span>
<div class="x" style="left:45px;top:497px"><i></i><b></b></div><svg style="left:61px;top:495px" width="16" height="16" viewBox="0 0 16 16"><g transform="translate(0,-1)"><rect x="0.5" y="3.5" width="15" height="12" rx="2" fill="url(#gg)" stroke="#8f8f8f"/><rect x="3" y="2.5" width="11" height="2.5" fill="#fff"/><text x="3.2" y="5" font-family="Liberation Sans,sans-serif" font-size="5.4" font-weight="bold" fill="#3558c8" textLength="10.6" lengthAdjust="spacingAndGlyphs">XYZ</text></g></svg>
<span class="t" style="left:82px;top:496px;transform:scaleX(0.982)">[Group:SelectorGroup]</span>
<div class="x" style="left:45px;top:514px"><i></i><b></b></div><svg style="left:61px;top:512px" width="16" height="16" viewBox="0 0 16 16"><rect x="1.5" y="2.5" width="13" height="10.6" fill="url(#gg)" stroke="#4866a8" stroke-width=".9"/><path d="M5.5 2.5 V5.5 H14.5" fill="none" stroke="#4866a8" stroke-width=".9"/><rect x="1" y="13" width="14" height="1" fill="#5a78b8"/></svg>
<span class="t" style="left:82px;top:513px;transform:scaleX(1.044)">[Tab:Tab]</span>
<div class="x" style="left:25px;top:531px"><i></i><b></b></div><svg style="left:41px;top:529px" width="16" height="16" viewBox="0 0 16 16"><polygon points="0.3,0.3 0.3,10.6 10.6,10.6" fill="#2f62e2"/><polygon points="2.4,5.2 2.4,8.8 6,8.8" fill="#6f98f2"/><circle cx="3.6" cy="7.5" r=".9" fill="#fff"/><rect x="1" y="11" width="15" height="4" fill="#eeb030"/><rect x="1" y="14" width="15" height="1" fill="#a87410"/><rect x="1" y="11" width="15" height=".8" fill="#c48c18"/><path d="M3 12 v1.4 M5 12 v1.4 M7 12 v1.4 M9 12 v1.4 M11 12 v1.4 M13 12 v1.4" stroke="#ffe9a8" stroke-width="1"/><polygon points="12.6,2 14.8,4.2 8.6,10.4 6.4,8.2" fill="#f2dc78"/><path d="M14.8 4.2 L8.6 10.4" stroke="#3a3a3a" stroke-width=".9"/><path d="M12.6 2 L6.4 8.2" stroke="#b89c40" stroke-width=".6"/><polygon points="6.4,8.2 8.6,10.4 5.4,11.2" fill="#e8e8ec"/><polygon points="6.4,10 7,10.7 5.4,11.2" fill="#202020"/><polygon points="13.4,1.2 14.6,0.4 16,1.8 15.6,3.4 14.8,4.2 12.6,2" fill="#d88472"/></svg>
<span class="t" style="left:62px;top:530px;transform:scaleX(0.967)">DesignList</span>
<div class="x" style="left:5px;top:548px"><i></i><b></b></div><svg style="left:21px;top:546px" width="16" height="16" viewBox="0 0 16 16"><path d="M7.2 8.6 V15 l1 1 1 -1 v-.8 h1.2 v-1.2 h-1.2 v-.9 h1.4 v-1.3 h-1.4 V8.6 z" fill="#e4a820" stroke="#a87408" stroke-width=".6"/><ellipse cx="7.6" cy="4.8" rx="4.1" ry="4.4" fill="url(#gk)" stroke="#b07c0c" stroke-width=".8"/><circle cx="7.6" cy="3.2" r="1.3" fill="#fff" stroke="#b07c0c" stroke-width=".6"/></svg>
<span class="t" style="left:42px;top:547px;transform:scaleX(0.967)">Permissions</span>
<div class="hl" style="left:1px;top:0px;width:168px;height:19px"></div>
<div class="hl" style="left:7px;top:69px;width:88px;height:18px"></div>
<div class="hl" style="left:99px;top:402px;width:383px;height:34px"></div>
</div>
</div>
</body></html>
